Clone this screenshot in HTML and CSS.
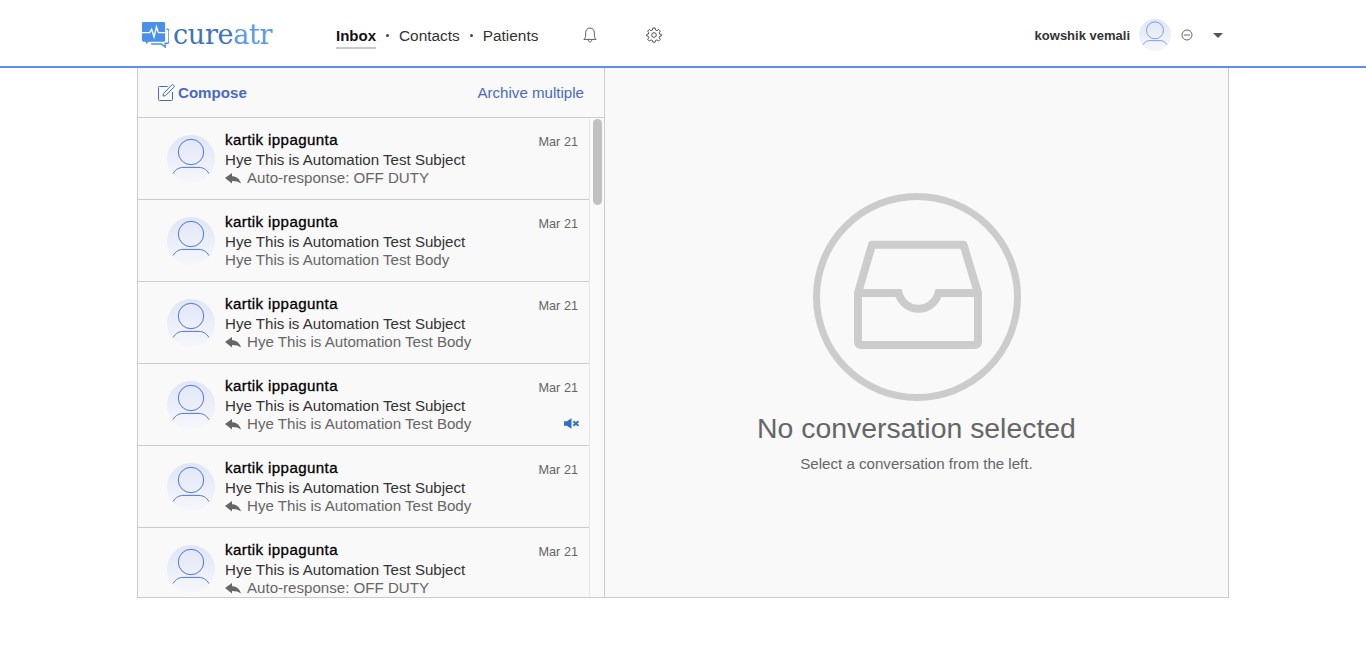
FILE: index.html
```html
<!DOCTYPE html>
<html lang="en">
<head>
    <meta charset="UTF-8">
    <title>cureatr - Inbox</title>
    <link rel="stylesheet" href="styles.css">
</head>
<body>
    <svg class="defs" width="0" height="0">
        <defs>
            <linearGradient id="avatarBg" x1="0" y1="0" x2="0" y2="1">
                <stop offset="0" stop-color="#e0e6f6"/>
                <stop offset="1" stop-color="#f6f7fc"/>
            </linearGradient>
            <symbol id="avatar" viewBox="0 0 48 48">
                <circle cx="24" cy="24" r="24" fill="url(#avatarBg)"/>
                <circle cx="24" cy="17" r="12.700" fill="none" stroke="#3f68d0" stroke-width="0.900"/>
                <path d="M6 38.500C9 34 12 32.600 16 32.400H32C36 32.600 39 34 42 38.500" fill="none" stroke="#3f68d0" stroke-width="0.900"/>
            </symbol>
            <symbol id="reply" viewBox="0 0 16 11">
                <path d="M0 5L7 0V3.200C11 3.200 14.500 5.500 16 10.500C13.800 8.800 11 8 7 8V10.500Z" fill="#666"/>
            </symbol>
        </defs>
    </svg>

    <header class="topbar">
        <div class="topbar-inner">
            <a class="logo" href="#">
                <svg class="logo-mark" width="27" height="26" viewBox="0 0 28 27">
                    <path d="M1.500 0H22.500A1.500 1.500 0 0 1 24 1.500V19A1.500 1.500 0 0 1 22.500 20.500H7L4 23V20.500H1.500A1.500 1.500 0 0 1 0 19V1.500A1.500 1.500 0 0 1 1.500 0Z" fill="#4a90e8"/>
                    <path d="M25.500 7.500H26.500A1.500 1.500 0 0 1 28 9V20.500A1.500 1.500 0 0 1 26.500 22H24V26L20 22.800H9.500" fill="none" stroke="#4a90e8" stroke-width="1.500"/>
                    <path d="M0 11H8L10 7.500L12.500 15.500L15 5L17 11H24" fill="none" stroke="#fff" stroke-width="1.400"/>
                </svg>
                <span class="logo-text"><span class="logo-dark">cure</span><span class="logo-light">atr</span></span>
            </a>
            <nav class="nav">
                <a class="nav-link active" href="#">Inbox</a>
                <span class="nav-dot"></span>
                <a class="nav-link" href="#">Contacts</a>
                <span class="nav-dot"></span>
                <a class="nav-link" href="#">Patients</a>
            </nav>
            <div class="nav-icons">
                <svg width="14" height="16" viewBox="0 0 16 18" fill="none" stroke="#555" stroke-width="1.100">
                    <path d="M1 14C2.500 12.500 3 11.500 3 8.500V6.500C3 3.500 5 1 8 1C11 1 13 3.500 13 6.500V8.500C13 11.500 13.500 12.500 15 14Z"/>
                    <path d="M6 14.500C6 16 7 17 8 17C9 17 10 16 10 14.500"/>
                </svg>
                <svg width="16" height="16" viewBox="0 0 24 24" fill="none" stroke="#555" stroke-width="1.500">
                    <circle cx="12" cy="12" r="3.500"/>
                    <path d="M10.300 1.500H13.700L14.300 4.500L16.500 5.400L19.100 3.700L21.500 6.100L19.800 8.700L20.600 10.800L23 11V13.400L20.600 13.900L19.800 16L21.400 18.600L19 21L16.400 19.400L14.300 20.200L13.700 22.800H10.300L9.700 20.200L7.600 19.400L5 21L2.600 18.600L4.200 16L3.400 13.900L1 13.400V11L3.400 10.800L4.200 8.700L2.500 6.100L4.900 3.700L7.500 5.400L9.700 4.500Z" stroke-linejoin="round"/>
                </svg>
            </div>
            <div class="user">
                <span class="user-name">kowshik vemali</span>
                <svg class="user-avatar" width="32" height="32"><use href="#avatar"/></svg>
                <svg class="user-status" width="12" height="12" viewBox="0 0 12 12" fill="none" stroke="#666">
                    <circle cx="6" cy="6" r="5"/>
                    <path d="M3 6H9"/>
                </svg>
                <span class="user-caret"></span>
            </div>
        </div>
    </header>

    <main class="panel">
        <section class="sidebar">
            <div class="toolbar">
                <a class="compose" href="#">
                    <svg width="17" height="17" viewBox="0 0 17 17" fill="none" stroke="#3f6bc4" stroke-width="1">
                        <path d="M9.500 2.500H1.500A1 1 0 0 0 0.500 3.500V15.500A1 1 0 0 0 1.500 16.500H13.500A1 1 0 0 0 14.500 15.500V8"/>
                        <path d="M5.500 9.500L13.500 1.200C14.200 0.500 15 0.500 15.700 1.200C16.400 1.900 16.400 2.700 15.700 3.400L7.500 11.700L5 12Z"/>
                    </svg>
                    Compose
                </a>
                <a class="archive" href="#">Archive multiple</a>
            </div>
            <div class="list">
                <div class="rows">
                    <article class="row">
                        <svg class="avatar" width="48" height="48"><use href="#avatar"/></svg>
                        <div class="row-body">
                            <div class="row-name">kartik ippagunta</div>
                            <div class="row-subject">Hye This is Automation Test Subject</div>
                            <div class="row-preview"><svg class="reply" width="16" height="11"><use href="#reply"/></svg>Auto-response: OFF DUTY</div>
                        </div>
                        <div class="row-date">Mar 21</div>
                    </article>
                    <article class="row">
                        <svg class="avatar" width="48" height="48"><use href="#avatar"/></svg>
                        <div class="row-body">
                            <div class="row-name">kartik ippagunta</div>
                            <div class="row-subject">Hye This is Automation Test Subject</div>
                            <div class="row-preview">Hye This is Automation Test Body</div>
                        </div>
                        <div class="row-date">Mar 21</div>
                    </article>
                    <article class="row">
                        <svg class="avatar" width="48" height="48"><use href="#avatar"/></svg>
                        <div class="row-body">
                            <div class="row-name">kartik ippagunta</div>
                            <div class="row-subject">Hye This is Automation Test Subject</div>
                            <div class="row-preview"><svg class="reply" width="16" height="11"><use href="#reply"/></svg>Hye This is Automation Test Body</div>
                        </div>
                        <div class="row-date">Mar 21</div>
                    </article>
                    <article class="row">
                        <svg class="avatar" width="48" height="48"><use href="#avatar"/></svg>
                        <div class="row-body">
                            <div class="row-name">kartik ippagunta</div>
                            <div class="row-subject">Hye This is Automation Test Subject</div>
                            <div class="row-preview"><svg class="reply" width="16" height="11"><use href="#reply"/></svg>Hye This is Automation Test Body</div>
                        </div>
                        <div class="row-date">Mar 21</div>
                        <svg class="muted" width="15" height="11" viewBox="0 0 16 11" fill="#2f72c4">
                            <path d="M0 3H3L8 0V11L3 8H0Z"/>
                            <path d="M10 3L15.500 8M15.500 3L10 8" stroke="#2f72c4" stroke-width="2.200" fill="none"/>
                        </svg>
                    </article>
                    <article class="row">
                        <svg class="avatar" width="48" height="48"><use href="#avatar"/></svg>
                        <div class="row-body">
                            <div class="row-name">kartik ippagunta</div>
                            <div class="row-subject">Hye This is Automation Test Subject</div>
                            <div class="row-preview"><svg class="reply" width="16" height="11"><use href="#reply"/></svg>Hye This is Automation Test Body</div>
                        </div>
                        <div class="row-date">Mar 21</div>
                    </article>
                    <article class="row">
                        <svg class="avatar" width="48" height="48"><use href="#avatar"/></svg>
                        <div class="row-body">
                            <div class="row-name">kartik ippagunta</div>
                            <div class="row-subject">Hye This is Automation Test Subject</div>
                            <div class="row-preview"><svg class="reply" width="16" height="11"><use href="#reply"/></svg>Auto-response: OFF DUTY</div>
                        </div>
                        <div class="row-date">Mar 21</div>
                    </article>
                </div>
                <div class="scrolltrack"><div class="scrollthumb"></div></div>
            </div>
        </section>
        <section class="empty">
            <svg class="empty-icon" width="208" height="208" viewBox="0 0 208 208" fill="none" stroke="#ccc">
                <circle cx="104" cy="104" r="100.500" stroke-width="7"/>
                <path d="M45 100L59 51.700H150.500L165 100V149A3 3 0 0 1 162 152H48A3 3 0 0 1 45 149Z" stroke-width="8" stroke-linejoin="round"/>
                <path d="M45 100H85.500A20.600 20.600 0 0 0 125.500 100H165" stroke-width="8"/>
            </svg>
            <h2 class="empty-title">No conversation selected</h2>
            <p class="empty-text">Select a conversation from the left.</p>
        </section>
    </main>
</body>
</html>
```

FILE: styles.css
```css
* {
    box-sizing: border-box;
}
body {
    margin: 0;
    height: 666px;
    overflow: hidden;
    background: #fff;
    font-family: "Liberation Sans", Arial, sans-serif;
    color: #333;
}
a {
    text-decoration: none;
    color: inherit;
}
.defs {
    display: block;
    height: 0;
}

/* top bar */
.topbar {
    height: 68px;
    border-bottom: 2px solid #5b8ff0;
}
.topbar-inner {
    width: 1092px;
    margin: 0 auto;
    height: 66px;
    display: flex;
    align-items: center;
    padding: 4px 6px 0 5px;
}
.logo {
    display: flex;
    align-items: center;
    width: 194px;
}
.logo-mark {
    margin-right: 4px;
}
.logo-text {
    font-family: "DejaVu Serif", serif;
    font-size: 27px;
    letter-spacing: -0.300px;
    line-height: 30px;
}
.logo-dark {
    color: #3f74b8;
}
.logo-light {
    color: #5b9bec;
}
.nav {
    display: flex;
    align-items: center;
    font-size: 15.400px;
}
.nav-link {
    color: #333;
    line-height: 22px;
    padding-top: 2px;
}
.nav-link.active {
    font-size: 15px;
    font-weight: bold;
    color: #111;
    border-bottom: 2px solid #c8c8c8;
    margin-top: 2px;
}
.nav-dot {
    width: 3px;
    height: 3px;
    background: #444;
    border-radius: 50%;
    margin: 0 10px 0 10px;
}
.nav-icons {
    display: flex;
    align-items: center;
    gap: 49px;
    margin-left: 45px;
}
.user {
    margin-left: auto;
    display: flex;
    align-items: center;
}
.user-name {
    font-size: 13px;
    font-weight: bold;
    color: #333;
}
.user-avatar {
    margin-left: 9px;
}
.user-status {
    margin-left: 10px;
}
.user-caret {
    width: 0;
    height: 0;
    margin-left: 20px;
    border-left: 5px solid transparent;
    border-right: 5px solid transparent;
    border-top: 5px solid #555;
}

/* main panel */
.panel {
    width: 1092px;
    height: 530px;
    margin: 0 auto;
    display: flex;
    background: #f9f9f9;
    border: 1px solid #ccc;
    border-top: none;
}
.sidebar {
    width: 467px;
    border-right: 1px solid #ccc;
    display: flex;
    flex-direction: column;
    overflow: hidden;
}
.toolbar {
    height: 50px;
    flex-shrink: 0;
    display: flex;
    align-items: center;
    justify-content: space-between;
    padding: 0 20px;
    border-bottom: 1px solid #ccc;
}
.compose {
    display: flex;
    align-items: center;
    gap: 3px;
    font-size: 15.100px;
    font-weight: bold;
    color: #4a69c0;
}
.archive {
    font-size: 15.100px;
    color: #4a69c0;
}
.list {
    flex: 1;
    display: flex;
    overflow: hidden;
}
.rows {
    flex: 1;
    overflow: hidden;
}
.row {
    height: 82px;
    display: flex;
    position: relative;
    padding: 17px 11px 0 29px;
    border-bottom: 1px solid #ccc;
}
.avatar {
    flex-shrink: 0;
    margin-right: 10px;
}
.row-body {
    flex: 1;
    margin-top: -4px;
    font-size: 15.100px;
}
.row-name {
    color: #000;
    line-height: 18px;
    letter-spacing: 0.400px;
    -webkit-text-stroke: 0.300px #000;
}
.row-subject {
    line-height: 20px;
    margin-top: 1px;
    color: #333;
}
.row-preview {
    line-height: 18px;
    margin-top: -1px;
    color: #666;
    display: flex;
    align-items: center;
}
.reply {
    margin-right: 6px;
}
.row-date {
    font-size: 12.700px;
    color: #666;
    line-height: 15px;
}
.muted {
    position: absolute;
    right: 10px;
    top: 54px;
}
.scrolltrack {
    width: 15px;
    flex-shrink: 0;
    background: #fafafa;
    border-left: 1px solid #e8e8e8;
    padding: 1px 2px 0 3px;
}
.scrollthumb {
    height: 86px;
    background: #c1c1c1;
    border-radius: 5px;
}

/* empty state */
.empty {
    flex: 1;
    display: flex;
    flex-direction: column;
    align-items: center;
    padding-top: 125px;
}
.empty-icon {
    display: block;
}
.empty-title {
    margin: 10px 0 0;
    font-size: 28.400px;
    font-weight: normal;
    line-height: 34px;
    color: #666;
}
.empty-text {
    margin: 10px 0 0;
    font-size: 15.100px;
    line-height: 18px;
    color: #666;
}
```
